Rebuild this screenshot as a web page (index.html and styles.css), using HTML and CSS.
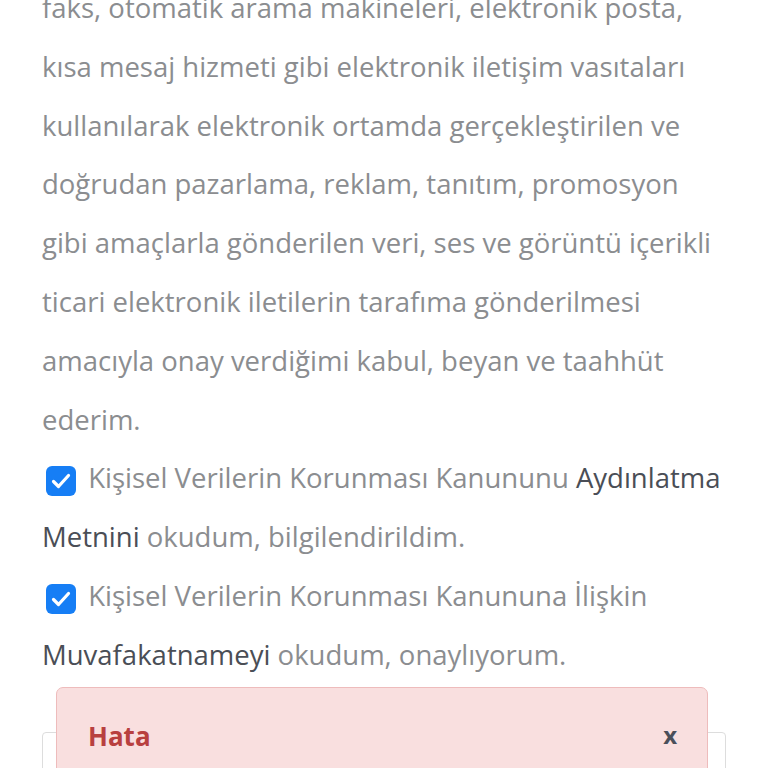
FILE: index.html
```html
<!DOCTYPE html>
<html lang="tr">
<head>
    <meta charset="UTF-8">
    <meta name="viewport" content="width=device-width, initial-scale=1.0">
    <title>Onay</title>
    <link rel="stylesheet" href="styles.css">
</head>
<body>

    <div class="consent">
        <p class="consent-text">
            faks, otomatik arama makineleri, elektronik posta,
            kısa mesaj hizmeti gibi elektronik iletişim vasıtaları
            kullanılarak elektronik ortamda gerçekleştirilen ve
            doğrudan pazarlama, reklam, tanıtım, promosyon
            gibi amaçlarla gönderilen veri, ses ve görüntü içerikli
            ticari elektronik iletilerin tarafıma gönderilmesi
            amacıyla onay verdiğimi kabul, beyan ve taahhüt
            ederim.
        </p>

        <label class="check">
            <span class="box">
                <svg viewBox="0 0 24 24" width="24" height="24"><path d="M4.5 12.5l5 5L19.5 6.5" fill="none" stroke="#fff" stroke-width="3.2" stroke-linecap="round" stroke-linejoin="round"/></svg>
            </span>
            Kişisel Verilerin Korunması Kanununu <a href="#">Aydınlatma Metnini</a> okudum, bilgilendirildim.
        </label>

        <label class="check">
            <span class="box">
                <svg viewBox="0 0 24 24" width="24" height="24"><path d="M4.5 12.5l5 5L19.5 6.5" fill="none" stroke="#fff" stroke-width="3.2" stroke-linecap="round" stroke-linejoin="round"/></svg>
            </span>
            Kişisel Verilerin Korunması Kanununa İlişkin <a href="#">Muvafakatnameyi</a> okudum, onaylıyorum.
        </label>

        <div class="field"></div>
    </div>

    <div class="alert">
        <strong>Hata</strong>
        <span class="close">x</span>
    </div>

</body>
</html>
```

FILE: styles.css
```css
body {
    font-family: "Open Sans", sans-serif;
    background-color: #fff;
    margin: 0;
    overflow: hidden;
}
.consent {
    padding: 0 42px;
    margin-top: -21px;
    font-size: 27.5px;
    line-height: 58.8px;
    color: #8b8d90;
}
.consent-text {
    margin: 0;
}
.check {
    display: block;
}
.box {
    display: inline-flex;
    align-items: center;
    justify-content: center;
    width: 30px;
    height: 30px;
    margin: 0 5px 0 4px;
    border-radius: 6px;
    background: #167ef5;
    vertical-align: -5px;
}
.check a {
    color: #4a4e56;
    text-decoration: none;
}
.field {
    margin-top: 47px;
    height: 60px;
    border: 1px solid #ddd;
    border-radius: 4px;
}
.alert {
    position: fixed;
    left: 56px;
    top: 687px;
    width: 652px;
    height: 120px;
    box-sizing: border-box;
    padding: 30px 30px 0 31px;
    display: flex;
    justify-content: space-between;
    align-items: flex-start;
    background: #f9dfdf;
    border: 1px solid #eebcbc;
    border-radius: 7px;
    font-size: 26px;
}
.alert strong {
    color: #b8403f;
}
.close {
    color: #4b4f5a;
    font-weight: bold;
    font-size: 24px;
}
```
